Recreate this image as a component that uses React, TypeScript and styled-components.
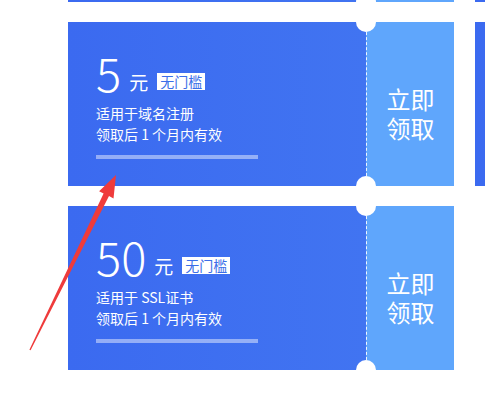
import styled, { createGlobalStyle } from 'styled-components';

const GlobalStyle = createGlobalStyle`
  html, body {
    margin: 0;
    padding: 0;
    background: #ffffff;
    overflow: hidden;
  }
  body {
    font-family: "Noto Sans CJK SC", "Noto Sans", sans-serif;
  }
`;

const Page = styled.div`
  position: relative;
  width: 485px;
  height: 411px;
  overflow: hidden;
  padding-left: 68px;
  box-sizing: border-box;
`;

const CouponGrid = styled.div`
  display: grid;
  grid-template-columns: 386px 386px;
  column-gap: 21px;
  row-gap: 20px;
  margin-top: -162px;
`;

const Coupon = styled.div`
  display: flex;
  height: 164px;
  position: relative;
`;

const Main = styled.div`
  width: 298px;
  background: linear-gradient(90deg, #3b6af0 0%, #4174f1 100%);
  padding: 25px 0 0 28px;
  box-sizing: border-box;
  color: #ffffff;
`;

const Side = styled.div`
  position: relative;
  flex: 1;
  background: #5fa6fc;
  border-left: 1px dashed rgba(255, 255, 255, 0.9);
  display: flex;
  align-items: center;
  justify-content: center;
  padding-top: 18px;
  box-sizing: border-box;
  color: #ffffff;
  font-size: 24px;
  line-height: 29px;
  text-align: center;

  &::before,
  &::after {
    content: '';
    position: absolute;
    left: -11px;
    width: 20px;
    height: 20px;
    border-radius: 50%;
    background: #ffffff;
  }
  &::before {
    top: -10px;
  }
  &::after {
    bottom: -10px;
  }
`;

const AmountRow = styled.div`
  display: flex;
  align-items: baseline;
  height: 51px;
`;

const Amount = styled.span`
  font-size: 47px;
  font-weight: 300;
  line-height: 50px;
`;

const Unit = styled.span`
  font-size: 19px;
  margin-left: 8px;
  transform: translateY(-2px);
`;

const Tag = styled.span`
  display: inline-block;
  background: #ffffff;
  color: #3b6ee8;
  font-size: 14px;
  line-height: 17px;
  padding: 0 3px;
  margin-left: 9px;
  transform: translateY(-5px);
`;

const Desc = styled.div`
  margin-top: 5px;
  font-size: 14px;
  line-height: 21px;
`;

const Bar = styled.div`
  margin-top: 10px;
  width: 162px;
  height: 4px;
  background: rgba(255, 255, 255, 0.45);
`;

const Arrow = styled.svg`
  position: absolute;
  left: 0;
  top: 0;
  pointer-events: none;
`;

type CouponData = { amount: string; scope: string };

const coupons: CouponData[] = [
  { amount: '5', scope: '适用于域名注册' },
  { amount: '5', scope: '适用于域名注册' },
  { amount: '5', scope: '适用于域名注册' },
  { amount: '10', scope: '适用于云服务器' },
  { amount: '50', scope: '适用于 SSL证书' },
];

const CouponCard = ({ amount, scope }: CouponData) => (
  <Coupon>
    <Main>
      <AmountRow>
        <Amount>{amount}</Amount>
        <Unit>元</Unit>
        <Tag>无门槛</Tag>
      </AmountRow>
      <Desc>
        <div>{scope}</div>
        <div>领取后 1 个月内有效</div>
      </Desc>
      <Bar />
    </Main>
    <Side>
      立即
      <br />
      领取
    </Side>
  </Coupon>
);

export default function App() {
  return (
    <>
      <GlobalStyle />
      <Page>
        <CouponGrid>
          {coupons.map((c, i) => (
            <CouponCard key={i} {...c} />
          ))}
        </CouponGrid>
        <Arrow width="485" height="411" viewBox="0 0 485 411">
          <polygon
            points="116,175 113.5,198.5 109,196 30.6,350.3 29.4,349.7 103.6,193.4 99.1,191.2"
            fill="#ef3b3b"
          />
        </Arrow>
      </Page>
    </>
  );
}
